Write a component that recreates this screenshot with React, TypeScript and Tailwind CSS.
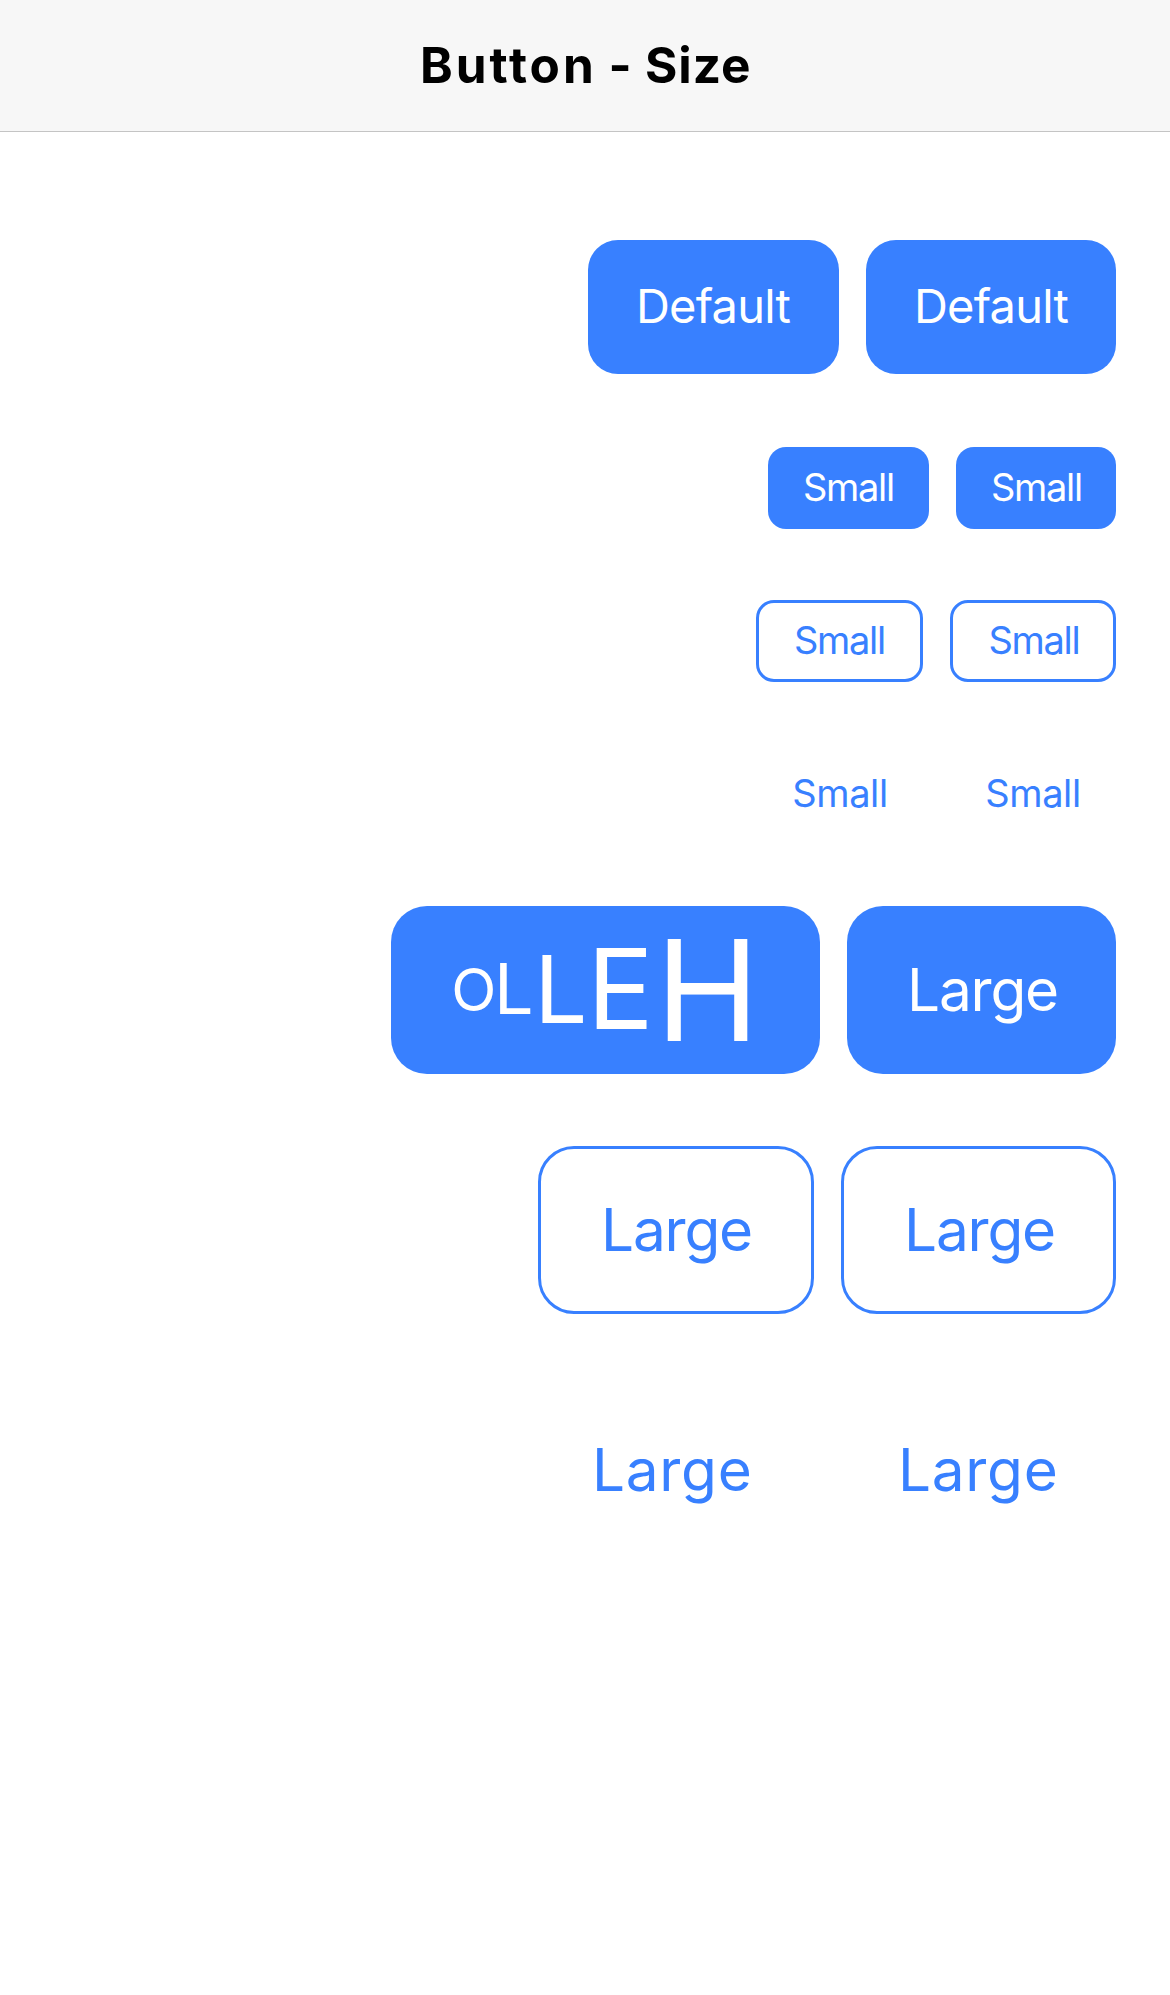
import React from "react";

type ButtonProps = { className: string; label: string; textClass: string };

function Button({ className, label, textClass }: ButtonProps) {
  return (
    <button type="button" className={`flex shrink-0 items-center justify-start ${className}`}>
      <span className={`block whitespace-nowrap leading-none ${textClass}`}>{label}</span>
    </button>
  );
}

const row = "flex justify-end gap-[27px]";
const solid = "bg-[#3880ff] text-white";
const outline = "border-[3px] border-[#3880ff]";
const defaultText = "mb-[4px] text-[47px] tracking-[-0.8px]";
const smallText = "mb-[2px] text-[38px] tracking-[-1.3px]";
const smallClearText = "mb-[4px] text-[38px] tracking-[-0.4px]";
const largeText = "text-[58.5px] tracking-[-1.2px]";
const largeClearText = "text-[58.5px] tracking-[0.7px]";

export default function App() {
  return (
    <div className="min-h-[1995px] bg-white font-['Inter',sans-serif] text-[#3880ff]">
      <header className="flex h-[132px] items-center border-b border-[#c4c4c4] bg-[#f7f7f7] pl-[420px]">
        <h1 className="whitespace-nowrap text-[49.5px] font-bold leading-none text-black [font-feature-settings:'calt'_0]">
          <span className="tracking-[3px]">Button</span> - <span className="ml-[1.5px] tracking-[1px]">Size</span>
        </h1>
      </header>
      <main className="flex flex-col pr-[54px] pt-[108px]">
        <div className={row}>
          <Button className={`h-[134px] w-[251px] rounded-[30px] pl-[48px] ${solid}`} label="Default" textClass={defaultText} />
          <Button className={`h-[134px] w-[250px] rounded-[30px] pl-[48px] ${solid}`} label="Default" textClass={defaultText} />
        </div>
        <div className={`${row} mt-[73px]`}>
          <Button className={`h-[82px] w-[161px] rounded-[18px] pl-[35px] ${solid}`} label="Small" textClass={smallText} />
          <Button className={`h-[82px] w-[160px] rounded-[18px] pl-[35px] ${solid}`} label="Small" textClass={smallText} />
        </div>
        <div className={`${row} mt-[71px]`}>
          <Button className={`h-[82px] w-[167px] rounded-[18px] pl-[35px] ${outline}`} label="Small" textClass={smallText} />
          <Button className={`h-[82px] w-[166px] rounded-[18px] pl-[35.5px] ${outline}`} label="Small" textClass={smallText} />
        </div>
        <div className={`${row} mt-[72px]`}>
          <Button className="h-[82px] w-[166px] pl-[35.3px]" label="Small" textClass={smallClearText} />
          <Button className="h-[82px] w-[166px] pl-[35.3px]" label="Small" textClass={smallClearText} />
        </div>
        <div className={`${row} mt-[70px]`}>
          <button type="button" className={`flex h-[168px] w-[429px] items-center rounded-[36px] pl-[60.3px] leading-none ${solid}`}>
            <span className="mb-[2px] text-[59px]">O</span>
            <span className="-ml-[2.4px] mb-[3px] text-[70px]">L</span>
            <span className="ml-[0.7px] mb-[2px] text-[94px]">L</span>
            <span className="-ml-[0.4px] mb-[3px] text-[111px]">E</span>
            <span className="ml-[1.8px] text-[140px]">H</span>
          </button>
          <Button className={`h-[168px] w-[269px] rounded-[36px] pl-[60px] ${solid}`} label="Large" textClass={largeText} />
        </div>
        <div className={`${row} mt-[72px]`}>
          <Button className={`h-[168px] w-[276px] rounded-[36px] pl-[60px] ${outline}`} label="Large" textClass={largeText} />
          <Button className={`h-[168px] w-[275px] rounded-[36px] pl-[60px] ${outline}`} label="Large" textClass={largeText} />
        </div>
        <div className={`${row} mt-[72px]`}>
          <Button className="h-[168px] w-[279px] pl-[60px]" label="Large" textClass={largeClearText} />
          <Button className="h-[168px] w-[278px] pl-[60px]" label="Large" textClass={largeClearText} />
        </div>
      </main>
    </div>
  );
}
